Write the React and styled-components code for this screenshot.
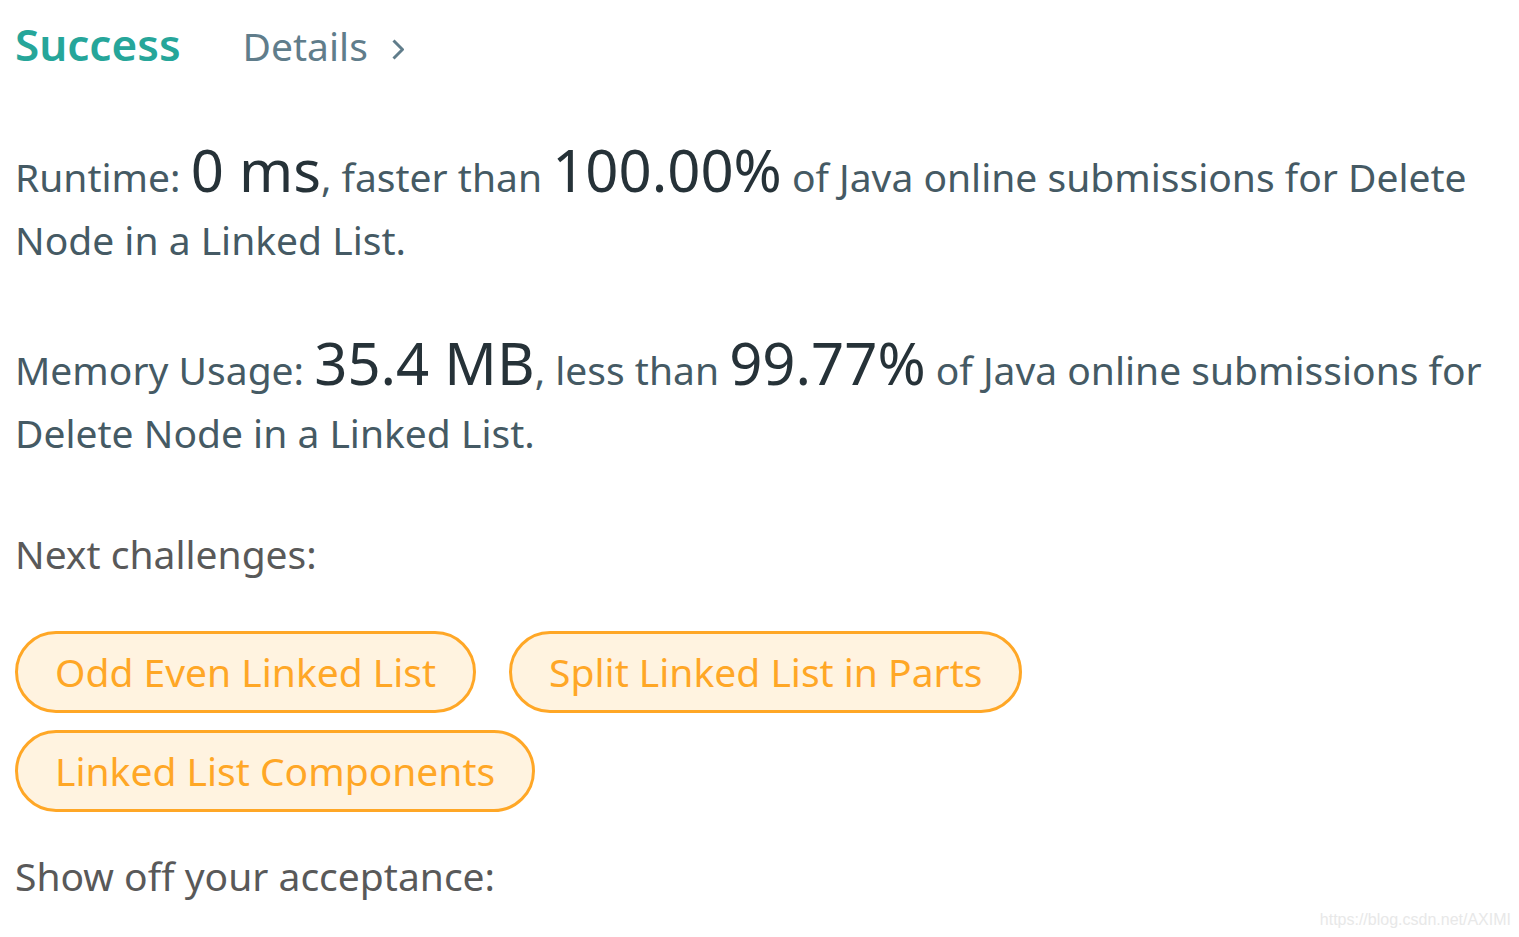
import React from 'react';
import styled, { createGlobalStyle } from 'styled-components';

const GlobalStyle = createGlobalStyle`
  html, body {
    margin: 0;
    padding: 0;
    background: #ffffff;
  }
  body {
    font-family: "Noto Sans", "Open Sans", sans-serif;
  }
`;

const challenges = [
  'Odd Even Linked List',
  'Split Linked List in Parts',
  'Linked List Components',
];

const App = () => (
  <>
    <GlobalStyle />
    <Page>
      <Header>
        <Status>Success</Status>
        <DetailsLink>
          Details
          <Chevron viewBox="0 0 12 21">
            <path d="M1.5 1.5l9 9-9 9" />
          </Chevron>
        </DetailsLink>
      </Header>

      <Result>
        Runtime: <Big>0 ms</Big>, faster than <Big>100.00%</Big> of Java online
        submissions for Delete Node in a Linked List.
      </Result>

      <Result>
        Memory Usage: <Big>35.4 MB</Big>, less than <Big>99.77%</Big> of Java
        online submissions for Delete Node in a Linked List.
      </Result>

      <Label>Next challenges:</Label>
      <Challenges>
        {challenges.map(c => (
          <Pill key={c}>{c}</Pill>
        ))}
      </Challenges>

      <Label $tight>Show off your acceptance:</Label>
      <Watermark>https://blog.csdn.net/AXIMI</Watermark>
    </Page>
  </>
);

const Page = styled.div`
  position: relative;
  width: 1519px;
  height: 937px;
  box-sizing: border-box;
  padding: 14px 30px 0 15px;
  overflow: hidden;
`;

const Header = styled.div`
  display: flex;
  align-items: baseline;
  gap: 62px;
  height: 64px;
`;

const Status = styled.span`
  font-size: 44px;
  font-weight: 600;
  color: #26a69a;
`;

const DetailsLink = styled.span`
  display: flex;
  align-items: center;
  gap: 24px;
  font-size: 39px;
  color: #607d8b;
`;

const Chevron = styled.svg`
  width: 12px;
  height: 21px;
  fill: none;
  stroke: #607d8b;
  stroke-width: 3;
  margin-top: 8px;
`;

const Result = styled.p`
  margin: 63px 0 0;
  font-size: 39px;
  line-height: 63px;
  color: #455a64;
`;

const Big = styled.span`
  font-size: 58px;
  line-height: 1;
  color: #263238;
`;

const Label = styled.p`
  margin: ${props => (props.$tight ? '32px' : '58px')} 0 0;
  font-size: 39px;
  line-height: 63px;
  color: #595959;
`;

const Challenges = styled.div`
  display: flex;
  flex-wrap: wrap;
  gap: 17px 33px;
  margin: 46px 0 0;
  max-width: 1100px;
`;

const Pill = styled.span`
  display: inline-flex;
  align-items: center;
  height: 82px;
  box-sizing: border-box;
  padding: 0 37px 2px;
  border: 3px solid #ffa726;
  border-radius: 41px;
  background: #fff3e0;
  color: #ffa726;
  font-size: 39px;
`;

const Watermark = styled.span`
  position: absolute;
  right: 8px;
  bottom: 8px;
  font-family: "Liberation Sans", Arial, sans-serif;
  font-size: 16px;
  color: #e8e8e8;
`;

export default App;
